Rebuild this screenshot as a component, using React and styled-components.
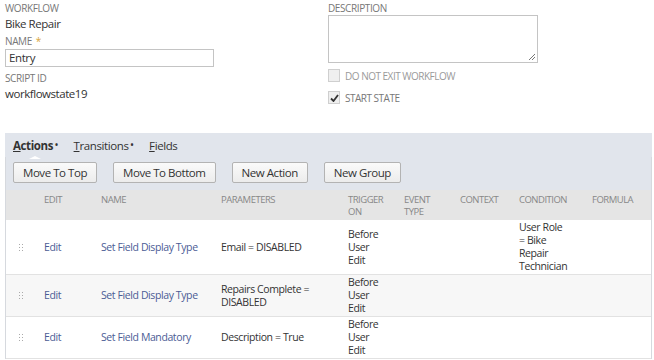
import React from "react";
import styled, { createGlobalStyle } from "styled-components";

const GlobalStyle = createGlobalStyle`
  body {
    margin: 0;
    background: #fff;
    font-family: "Open Sans", "Liberation Sans", sans-serif;
    color: #333;
  }
`;

const Page = styled.div`
  width: 654px;
  height: 360px;
  overflow: hidden;
`;

const Form = styled.section`
  display: grid;
  grid-template-columns: 323px 1fr;
  padding: 2px 0 0 5px;
  height: 131px;
`;

const Column = styled.div`
  display: flex;
  flex-direction: column;
  align-items: flex-start;
`;

const Label = styled.div`
  font-size: 10px;
  line-height: 13px;
  letter-spacing: -0.4px;
  color: #777;
  text-transform: uppercase;
`;

const Star = styled.span`
  color: #d9a43a;
  margin-left: 4px;
`;

const Value = styled.div`
  font-size: 11.5px;
  line-height: 15px;
  letter-spacing: -0.45px;
  color: #333;
  margin: 1px 0 4px;
`;

const Input = styled.div`
  box-sizing: border-box;
  width: 209px;
  height: 18px;
  border: 1px solid #c4c4c4;
  font-size: 11.5px;
  line-height: 16px;
  letter-spacing: -0.4px;
  padding: 0 3px;
  margin: 1px 0 5px;
`;

const TextArea = styled.div`
  position: relative;
  box-sizing: border-box;
  width: 210px;
  height: 48px;
  border: 1px solid #c4c4c4;
  margin: 0 0 6px;
`;

const Grip = styled.svg`
  position: absolute;
  right: 1px;
  bottom: 1px;
`;

const CheckRow = styled.div`
  display: flex;
  align-items: center;
  gap: 5px;
  height: 13px;
  margin-bottom: 9px;
  font-size: 10px;
  letter-spacing: -0.5px;
  text-transform: uppercase;
  color: ${(p) => (p.$disabled ? "#9a9a9a" : "#777")};
`;

const Box = styled.span`
  box-sizing: border-box;
  width: 12px;
  height: 13px;
  border: 1px solid #cfcfcf;
  background: #efefef;
  display: flex;
  align-items: center;
  justify-content: center;
`;

const Panel = styled.section`
  margin: 0 2px 0 5px;
  background: #e1e5ec;
`;

const Tabs = styled.nav`
  display: flex;
  height: 24px;
  align-items: center;
  padding: 0 0 0 8px;
  gap: 16px;
  font-size: 11.5px;
  letter-spacing: -0.4px;
`;

const Tab = styled.span`
  position: relative;
  color: #333;
  font-weight: ${(p) => (p.$active ? 700 : 400)};
  u {
    text-decoration: underline;
  }
  &::after {
    content: "";
    display: ${(p) => (p.$active ? "block" : "none")};
    position: absolute;
    left: 16px;
    bottom: -6px;
    border-left: 6px solid transparent;
    border-right: 6px solid transparent;
    border-bottom: 3px solid #fff;
  }
`;

const Dot = styled.span`
  font-size: 8px;
  margin-left: 2px;
  vertical-align: 2px;
  font-weight: 700;
`;

const Body = styled.div`
  border-left: 1px solid #d6d9de;
  border-right: 1px solid #d6d9de;
`;

const Toolbar = styled.div`
  display: flex;
  gap: 16px;
  padding: 5px 0 7px 7px;
`;

const Button = styled.button`
  height: 21px;
  padding: 0 9px;
  border: 1px solid #b3b3b3;
  border-radius: 2px;
  background: linear-gradient(#fafafa, #ececec);
  font-family: "Open Sans", "Liberation Sans", sans-serif;
  font-size: 11.5px;
  letter-spacing: -0.45px;
  color: #333;
`;

const Table = styled.table`
  width: 100%;
  border-collapse: collapse;
  table-layout: fixed;
  background: #fff;
`;

const Th = styled.th`
  background: #e5e5e5;
  height: 26px;
  vertical-align: top;
  text-align: left;
  font-weight: 400;
  font-size: 9.5px;
  line-height: 12px;
  letter-spacing: -0.5px;
  color: #888;
  padding: 4px 10px 0 5px;
  text-transform: uppercase;
`;

const Row = styled.tr`
  background: ${(p) => (p.$alt ? "#f7f7f7" : "#fff")};
  border-bottom: 1px solid #e2e2e2;
`;

const Td = styled.td`
  font-size: 10.5px;
  line-height: 13px;
  letter-spacing: -0.4px;
  color: ${(p) => (p.$link ? "#4b5c95" : "#333")};
  padding: 1px 8px 1px 5px;
  vertical-align: middle;
`;

const HandleCell = styled(Td)`
  padding-left: 12px;
`;

const Narrow = styled.div`
  width: ${(p) => p.$w}px;
`;

const Handle = () => (
  <svg width="6" height="7" viewBox="0 0 6 7">
    {[0, 3, 6].map((y) =>
      [0, 3].map((x) => (
        <rect key={`${x}-${y}`} x={x + 1} y={y} width="1" height="1" fill="#aaa" />
      ))
    )}
  </svg>
);

const cols = [33, 57, 120, 127, 56, 56, 59, 73, 64];

const rows = [
  {
    name: "Set Field Display Type",
    params: "Email = DISABLED",
    condition: "User Role = Bike Repair Technician",
  },
  {
    name: "Set Field Display Type",
    params: "Repairs Complete = DISABLED",
    condition: "",
  },
  {
    name: "Set Field Mandatory",
    params: "Description = True",
    condition: "",
  },
];

export default function App() {
  return (
    <Page>
      <GlobalStyle />
      <Form>
        <Column>
          <Label>Workflow</Label>
          <Value>Bike Repair</Value>
          <Label>
            Name<Star>*</Star>
          </Label>
          <Input>Entry</Input>
          <Label>Script ID</Label>
          <Value>workflowstate19</Value>
        </Column>
        <Column>
          <Label>Description</Label>
          <TextArea>
            <Grip width="8" height="8" viewBox="0 0 8 8">
              <path d="M7 1 L1 7 M7 4 L4 7" stroke="#777" strokeWidth="1" />
            </Grip>
          </TextArea>
          <CheckRow $disabled>
            <Box />
            Do not exit workflow
          </CheckRow>
          <CheckRow>
            <Box>
              <svg width="9" height="8" viewBox="0 0 9 8">
                <path d="M1 4.5 L3.5 7 L8 1" stroke="#333" strokeWidth="1.8" fill="none" />
              </svg>
            </Box>
            Start state
          </CheckRow>
        </Column>
      </Form>
      <Panel>
        <Tabs>
          <Tab $active>
            <u>A</u>ctions<Dot>•</Dot>
          </Tab>
          <Tab>
            <u>T</u>ransitions<Dot>•</Dot>
          </Tab>
          <Tab>
            <u>F</u>ields
          </Tab>
        </Tabs>
        <Body>
          <Toolbar>
            <Button>Move To Top</Button>
            <Button>Move To Bottom</Button>
            <Button>New Action</Button>
            <Button>New Group</Button>
          </Toolbar>
          <Table>
            <colgroup>
              {cols.map((w, i) => (
                <col key={i} style={{ width: w }} />
              ))}
            </colgroup>
            <thead>
              <tr>
                <Th />
                <Th>Edit</Th>
                <Th>Name</Th>
                <Th>Parameters</Th>
                <Th>Trigger on</Th>
                <Th>Event type</Th>
                <Th>Context</Th>
                <Th>Condition</Th>
                <Th>Formula</Th>
              </tr>
            </thead>
            <tbody>
              {rows.map((r, i) => (
                <Row key={i} $alt={i === 1}>
                  <HandleCell>
                    <Handle />
                  </HandleCell>
                  <Td $link>Edit</Td>
                  <Td $link>{r.name}</Td>
                  <Td>{r.params}</Td>
                  <Td>
                    <Narrow $w={30}>Before User Edit</Narrow>
                  </Td>
                  <Td />
                  <Td />
                  <Td>
                    <Narrow $w={50}>{r.condition}</Narrow>
                  </Td>
                  <Td />
                </Row>
              ))}
            </tbody>
          </Table>
        </Body>
      </Panel>
    </Page>
  );
}
